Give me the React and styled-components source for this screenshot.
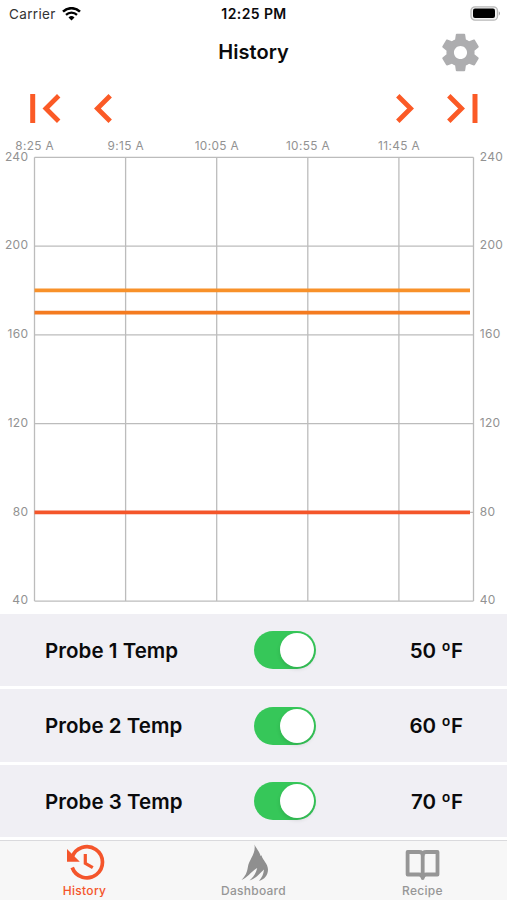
import React, { useState } from "react";
import styled, { createGlobalStyle } from "styled-components";

const GlobalStyle = createGlobalStyle`
  * { box-sizing: border-box; }
  body {
    margin: 0;
    background: #fff;
    font-family: Inter, "Liberation Sans", sans-serif;
    color: #0a0a0c;
  }
  button { font: inherit; border: 0; padding: 0; background: none; cursor: pointer; }
`;

const Screen = styled.div`
  width: 507px;
  height: 900px;
  display: flex;
  flex-direction: column;
  overflow: hidden;
  background: #fff;
`;

const Icon = styled.svg`
  display: block;
  flex: none;
`;

const StatusBar = styled.header`
  height: 28px;
  flex: none;
  display: grid;
  grid-template-columns: 1fr auto 1fr;
  align-items: center;
  padding: 0 6px 1px 9px;
  font-size: 13.5px;
`;

const Carrier = styled.div`
  display: flex;
  align-items: center;
  gap: 6px;
  color: #333;
  letter-spacing: 0.35px;
`;

const Clock = styled.div`
  font-weight: 600;
  font-size: 14px;
  letter-spacing: 0.4px;
  padding-right: 2px;
`;

const Battery = styled.div`
  justify-self: end;
`;

const TitleBar = styled.div`
  height: 52px;
  flex: none;
  display: grid;
  grid-template-columns: 1fr auto 1fr;
  align-items: center;
  padding: 0 24px 4px;
`;

const Title = styled.h1`
  grid-column: 2;
  margin: 0;
  font-size: 20px;
  font-weight: 600;
  letter-spacing: 0.05px;
  line-height: 24px;
`;

const SettingsButton = styled.button`
  justify-self: end;
  height: 46px;
`;

const Pager = styled.nav`
  height: 57px;
  flex: none;
  display: flex;
  justify-content: space-between;
  padding: 14px 29px 0 30px;
`;

const PagerGroup = styled.div`
  display: flex;
  align-items: flex-start;
  gap: 33px;
`;

const PagerButton = styled.button`
  height: 29px;
  color: #fb5a26;
`;

const ChartArea = styled.svg`
  display: block;
  flex: none;
`;

const AxisLabel = styled.text`
  font-size: ${(p) => p.$size}px;
  letter-spacing: ${(p) => p.$spacing}px;
  fill: #929292;
`;

const ProbeList = styled.section`
  flex: none;
  height: 227px;
  padding-top: 0.5px;
  display: flex;
  flex-direction: column;
  gap: 3px;
`;

const ProbeRow = styled.div`
  height: 72.6px;
  flex: none;
  display: grid;
  grid-template-columns: 209px 1fr 145px;
  align-items: center;
  padding: 1px 44px 0 45px;
  background: #f0eff4;
  font-size: 20.5px;
  font-weight: 600;
  letter-spacing: 0.05px;
`;

const ProbeValue = styled.span`
  text-align: right;
  letter-spacing: 0;
`;

const Toggle = styled.button`
  width: 62px;
  height: 38px;
  border-radius: 19px;
  padding: 2px;
  display: flex;
  align-items: center;
  justify-content: ${(p) => (p.$on ? "flex-end" : "flex-start")};
  background: ${(p) => (p.$on ? "#36c759" : "#dcdce0")};
`;

const Knob = styled.span`
  width: 34px;
  height: 34px;
  border-radius: 50%;
  background: #fff;
  box-shadow: 0 2px 4px rgba(0, 0, 0, 0.12);
`;

const TabBar = styled.nav`
  flex: 1;
  display: grid;
  grid-template-columns: repeat(3, 169px);
  background: #f7f7f7;
  border-top: 1px solid #dadadd;
`;

const Tab = styled.button`
  display: flex;
  flex-direction: column;
  align-items: center;
  padding-top: 2px;
  gap: 2px;
  color: ${(p) => (p.$active ? "#f4552b" : "#969696")};
  font-size: 12px;
  font-weight: 500;
  line-height: 15px;
  letter-spacing: ${(p) => p.$spacing}px;
`;

const WifiIcon = () => (
  <Icon width="19" height="14" viewBox="0 0 19 14" fill="none" stroke="#000">
    <path d="M1 4.600a12.2 12.2 0 0 1 17 0" strokeWidth="2.500" />
    <path d="M4 7.900a7.9 7.9 0 0 1 11 0" strokeWidth="2.200" />
    <path d="M9.5 13.500 6.500 10.500a4.3 4.3 0 0 1 6 0z" fill="#000" stroke="none" />
  </Icon>
);

const BatteryIcon = () => (
  <Icon width="31" height="15" viewBox="0 0 31 15">
    <rect x="1" y="0.8" width="26.5" height="13.4" rx="4" fill="#f4f4f4" stroke="#b8b8b8" strokeWidth="1.3" />
    <rect x="3" y="2.5" width="22" height="9.6" rx="2" fill="#000" />
    <path d="M28.800 5.300q2.200 2.200 0 4.400z" fill="#999" />
  </Icon>
);

const GearIcon = () => (
  <Icon width="45" height="45" viewBox="0 0 24 24" fill="#adadaf">
    <path d="M19.43 12.98c.04-.32.07-.64.07-.98s-.03-.66-.07-.98l2.11-1.65c.19-.15.24-.42.12-.64l-2-3.46c-.12-.22-.39-.3-.61-.22l-2.49 1c-.52-.4-1.08-.73-1.69-.98l-.38-2.65C14.46 2.18 14.25 2 14 2h-4c-.25 0-.46.18-.49.42l-.38 2.65c-.61.25-1.17.59-1.69.98l-2.49-1c-.23-.09-.49 0-.61.22l-2 3.46c-.13.22-.07.49.12.64l2.11 1.65c-.04.32-.07.65-.07.98s.03.66.07.98l-2.11 1.65c-.19.15-.24.42-.12.64l2 3.46c.12.22.39.3.61.22l2.49-1c.52.4 1.08.73 1.69.98l.38 2.65c.03.24.24.42.49.42h4c.25 0 .46-.18.49-.42l.38-2.65c.61-.25 1.17-.59 1.69-.98l2.49 1c.23.09.49 0 .61-.22l2-3.46c.12-.22.07-.49-.12-.64l-2.11-1.65zM12 15.5c-1.93 0-3.5-1.57-3.5-3.5s1.57-3.5 3.5-3.5 3.5 1.57 3.5 3.5-1.57 3.5-3.5 3.5z" />
  </Icon>
);

const FirstIcon = () => (
  <Icon width="31" height="29" viewBox="0 0 31 29" fill="none" stroke="currentColor">
    <path d="M2.7 0v29" strokeWidth="5" />
    <path d="M28.7 1.7 15.9 14.5 28.7 27.3" strokeWidth="4.8" />
  </Icon>
);

const PrevIcon = () => (
  <Icon width="18" height="29" viewBox="0 0 18 29" fill="none" stroke="currentColor" strokeWidth="4.8">
    <path d="M16.2 1.7 3.4 14.5 16.2 27.3" />
  </Icon>
);

const NextIcon = () => (
  <Icon width="18" height="29" viewBox="0 0 18 29" fill="none" stroke="currentColor" strokeWidth="4.8">
    <path d="M1.8 1.7 14.6 14.5 1.8 27.3" />
  </Icon>
);

const LastIcon = () => (
  <Icon width="31" height="29" viewBox="0 0 31 29" fill="none" stroke="currentColor">
    <path d="M1.8 1.7 14.6 14.5 1.8 27.3" strokeWidth="4.8" />
    <path d="M28 0v29" strokeWidth="5" />
  </Icon>
);

const HistoryIcon = () => (
  <Icon width="40" height="38" viewBox="0 0 40 38" fill="none" stroke="currentColor">
    <path d="M7 14.500A15.600 15.600 0 1 1 7.200 24.500" strokeWidth="3.700" />
    <path d="M2 6V18.800H14.800z" fill="currentColor" stroke="none" />
    <path d="M20.300 11V20.300L27.800 24.600" strokeWidth="3.200" />
  </Icon>
);

const FlameIcon = () => (
  <Icon width="40" height="38" viewBox="0 0 40 38" fill="#8f8f8f">
    <path d="M20.500 1.500C22 5.500 25.500 8 26.600 13L27.400 12.200C29 17.500 33.800 20.500 34 26.500C34 32 30.500 36.500 25 38C28 34.500 29.500 31 30 26.500C26.500 29.500 22.500 35.500 15.500 37.500C19.500 34 22 30 23.200 25C18 27.500 13.500 34.500 7.500 37C11.500 33 13 29.500 13.800 24.500C15 16 22 11.500 20.500 1.500Z" />
  </Icon>
);

const BookIcon = () => (
  <Icon width="40" height="38" viewBox="0 0 40 38" fill="none" stroke="currentColor" strokeWidth="3.8">
    <path d="M4.600 9H16Q19.700 9 19.700 12Q19.700 9 23.300 9H34.500V31.500H23.300Q19.700 31.500 19.700 35Q19.700 31.500 16 31.500H4.600Z" strokeLinejoin="round" />
    <path d="M19.700 11.500V35" />
  </Icon>
);

const times = ["8:25 A", "9:15 A", "10:05 A", "10:55 A", "11:45 A"];
const temps = [240, 200, 160, 120, 80, 40];
const series = [
  { level: 180, color: "#f8912a" },
  { level: 170, color: "#f47b20" },
  { level: 80, color: "#f4562a" },
];

const LEFT = 34.5;
const RIGHT = 473.5;
const TOP = 20.3;
const STEP = 88.75;
const yFor = (t) => TOP + ((240 - t) / 40) * STEP;

const Chart = () => (
  <ChartArea width="507" height="476" viewBox="0 0 507 476">
    <g stroke="#bcbcbc" strokeWidth="1.3">
      {temps.map((t) => (
        <line key={t} x1={LEFT} x2={RIGHT} y1={yFor(t)} y2={yFor(t)} />
      ))}
      {times.map((t, i) => (
        <line key={t} x1={LEFT + i * 91.1} x2={LEFT + i * 91.1} y1={TOP} y2={yFor(40)} />
      ))}
      <line x1={RIGHT} x2={RIGHT} y1={TOP} y2={yFor(40)} />
    </g>
    {series.map((s) => (
      <line key={s.level} x1={LEFT} x2="470" y1={yFor(s.level)} y2={yFor(s.level)} stroke={s.color} strokeWidth="3.8" />
    ))}
    {times.map((t, i) => (
      <AxisLabel key={t} $size={11.8} $spacing={0.4} x={LEFT + i * 91.1 + 0.2} y="12.700" textAnchor="middle">
        {t}
      </AxisLabel>
    ))}
    {temps.map((t) => (
      <g key={t}>
        <AxisLabel $size={12} $spacing={0.3} x="28.300" y={yFor(t) + 3.2} textAnchor="end">
          {t}
        </AxisLabel>
        <AxisLabel $size={12} $spacing={0.3} x="479.800" y={yFor(t) + 3.2}>
          {t}
        </AxisLabel>
      </g>
    ))}
  </ChartArea>
);

const probes = [
  { name: "Probe 1 Temp", value: "50 ºF" },
  { name: "Probe 2 Temp", value: "60 ºF" },
  { name: "Probe 3 Temp", value: "70 ºF" },
];

const tabs = [
  { name: "History", icon: HistoryIcon, spacing: 0.3 },
  { name: "Dashboard", icon: FlameIcon, spacing: 0.25 },
  { name: "Recipe", icon: BookIcon, spacing: 0.3 },
];

const Probe = ({ name, value }) => {
  const [on, setOn] = useState(true);
  return (
    <ProbeRow>
      <span>{name}</span>
      <Toggle $on={on} role="switch" aria-checked={on} aria-label={name} onClick={() => setOn(!on)}>
        <Knob />
      </Toggle>
      <ProbeValue>{value}</ProbeValue>
    </ProbeRow>
  );
};

export default function App() {
  const [active, setActive] = useState("History");
  return (
    <>
      <GlobalStyle />
      <Screen>
        <StatusBar>
          <Carrier>
            Carrier
            <WifiIcon />
          </Carrier>
          <Clock>12:25 PM</Clock>
          <Battery>
            <BatteryIcon />
          </Battery>
        </StatusBar>
        <TitleBar>
          <Title>History</Title>
          <SettingsButton aria-label="Settings">
            <GearIcon />
          </SettingsButton>
        </TitleBar>
        <Pager>
          <PagerGroup>
            <PagerButton aria-label="First"><FirstIcon /></PagerButton>
            <PagerButton aria-label="Previous"><PrevIcon /></PagerButton>
          </PagerGroup>
          <PagerGroup>
            <PagerButton aria-label="Next"><NextIcon /></PagerButton>
            <PagerButton aria-label="Last"><LastIcon /></PagerButton>
          </PagerGroup>
        </Pager>
        <Chart />
        <ProbeList>
          {probes.map((p) => (
            <Probe key={p.name} {...p} />
          ))}
        </ProbeList>
        <TabBar>
          {tabs.map(({ name, icon: TabIcon, spacing }) => (
            <Tab key={name} $active={name === active} $spacing={spacing} onClick={() => setActive(name)}>
              <TabIcon />
              {name}
            </Tab>
          ))}
        </TabBar>
      </Screen>
    </>
  );
}
